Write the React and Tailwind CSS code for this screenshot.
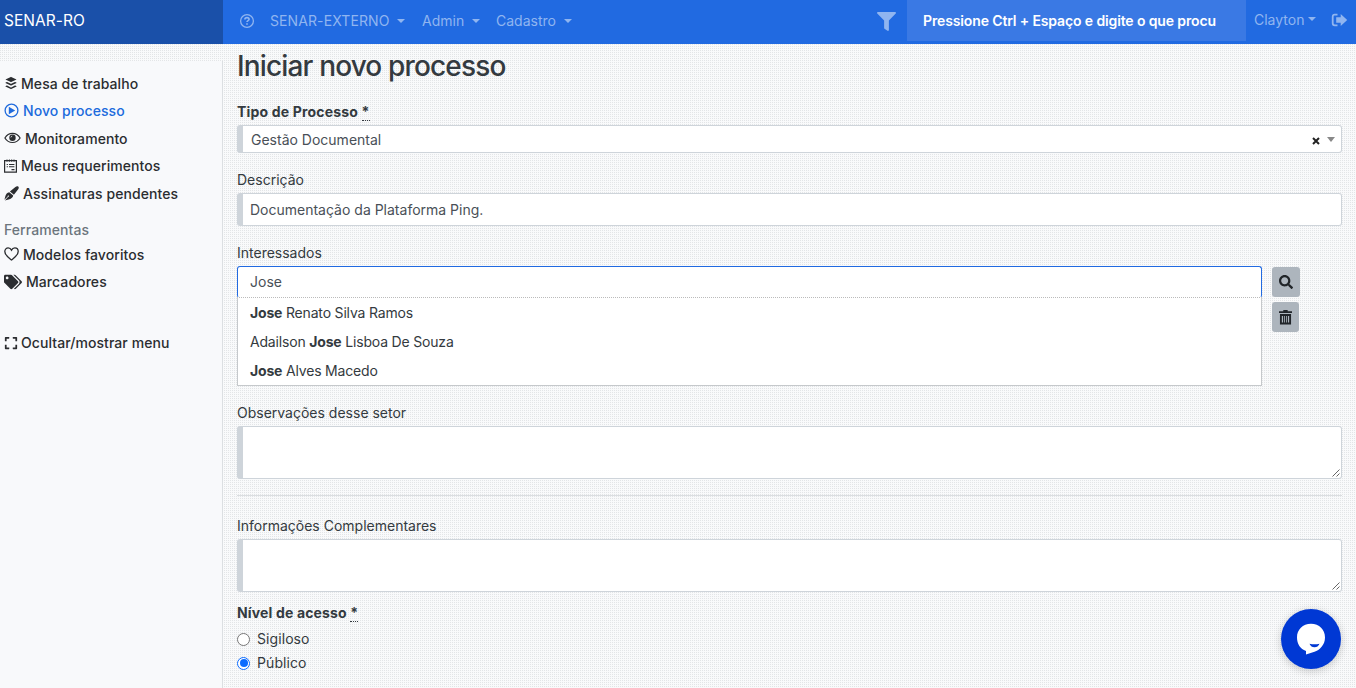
import React from "react";
import { FaBuffer, FaTags, FaSearch, FaExpand, FaFilter } from "react-icons/fa";

const label = "text-[14px] leading-[22px] text-[#343a40]";
const field =
  "w-full rounded-[3px] border border-l-[6px] border-[#ced4da] bg-white text-[14px] text-[#495057]";

function Caret({ className = "" }) {
  return (
    <span
      className={`inline-block h-0 w-0 border-x-4 border-t-4 border-x-transparent border-t-current ${className}`}
    />
  );
}

function HelpIcon() {
  return (
    <svg width="16" height="16" viewBox="0 0 16 16" fill="none" stroke="currentColor">
      <circle cx="8" cy="8" r="6.4" strokeWidth="1.3" />
      <path d="M5.9 6.5C5.9 5.2 6.8 4.6 8 4.6s2.1.7 2.1 1.7c0 1.4-2.1 1.3-2.1 2.7M8 10.3v1.5" strokeWidth="1.6" />
    </svg>
  );
}

function PlayIcon() {
  return (
    <svg width="15" height="15" viewBox="0 0 15 15">
      <circle cx="7.5" cy="7.5" r="6.4" fill="none" stroke="currentColor" strokeWidth="1.3" />
      <path d="M4.8 3.800v7.400l6.400-3.700z" fill="currentColor" />
    </svg>
  );
}

function EyeIcon() {
  return (
    <svg width="17" height="12" viewBox="0 0 17 12" fill="none" stroke="currentColor">
      <path d="M.9 6C4.5-.3 12.5-.3 16.100 6c-3.600 6-11.600 6-15.200 0z" strokeWidth="1.200" />
      <circle cx="8.500" cy="5.800" r="3.200" fill="currentColor" stroke="none" />
      <path d="M6.900 5.400q.2-1 1.300-1.300" stroke="white" strokeWidth=".8" />
    </svg>
  );
}

function FormIcon() {
  return (
    <svg width="13" height="14" viewBox="0 0 13 14" fill="none" stroke="currentColor">
      <path d="M.6 1.600h11.800v11.600H.6z" strokeWidth="1.200" />
      <path d="M3 .5v2.200M5.400.5v2.200M7.700.5v2.200M10 .5v2.200" strokeWidth="1" />
      <path d="M2.700 5.500h1.200M5 5.500h5.400M2.700 7.800h1.200M5 7.800h5.400M7.500 10.600h3" strokeWidth="1.100" />
    </svg>
  );
}

function PenIcon() {
  return (
    <svg width="15" height="15" viewBox="0 0 15 15" fill="currentColor">
      <path d="M14.200.5c.9.7.6 1.800 0 2.700L9.900 8.800 5.900 5.500 11.400.9c.9-.7 2-1 2.800-.4zM5.200 6.200l4 3.300c-.2 2.300-2.300 3.400-4.600 3.900L.9 14.400l3.300-3.700c.9.200 1.300-.8.500-1.200-.7-.2-1.200.2-1 .9L.4 13.700 1.400 10c.6-2 1.700-3.600 3.800-3.800z" />
    </svg>
  );
}

function HeartIcon() {
  return (
    <svg width="15" height="14" viewBox="0 0 15 14" fill="none" stroke="currentColor" strokeWidth="1.300">
      <path d="M7.500 13C5.200 11.100.8 8.200.8 4.500.8 2.300 2.400.9 4.200.9c1.400 0 2.600.8 3.300 2.200C8.200 1.700 9.400.9 10.800.9c1.800 0 3.400 1.400 3.400 3.600 0 3.700-4.400 6.600-6.700 8.500z" />
    </svg>
  );
}

function LogoutIcon() {
  return (
    <svg width="17" height="14" viewBox="0 0 17 14">
      <path d="M6.500 1.700H3.700q-2 0-2 2v6.600q0 2 2 2h2.800" fill="none" stroke="currentColor" strokeWidth="1.800" />
      <path d="M9.700 1v3.300H5.200v5.400h4.500V13L16.200 7z" fill="currentColor" />
    </svg>
  );
}

function TrashIcon() {
  return (
    <svg width="13" height="15" viewBox="0 0 13 15" fill="none" stroke="currentColor">
      <path d="M0 2.200h13M4.300 1h4.400" strokeWidth="1.800" />
      <path d="M1.900 5h9.200v8.500H1.900z" strokeWidth="1.900" />
      <path d="M4.600 5v8M6.500 5v8M8.400 5v8" strokeWidth="1.100" />
    </svg>
  );
}

function Grip() {
  return (
    <svg className="absolute right-px bottom-px" width="8" height="8" viewBox="0 0 8 8" stroke="#555" strokeWidth=".9">
      <path d="M.5 7.500l7-7M4.500 7.500l3-3" />
    </svg>
  );
}

function Item({ icon, text, gap = "gap-[4px]", active }) {
  return (
    <a className={`flex h-[27.400px] items-center ${gap} ${active ? "text-[#206bdd]" : "text-[#2b2d30]"}`}>
      {icon}
      <span>{text}</span>
    </a>
  );
}

function NavItem({ text, className }) {
  return (
    <span className={`flex items-center gap-[8px] ${className}`}>
      {text}
      <Caret />
    </span>
  );
}

function Required() {
  return <abbr className="border-b border-dotted border-[#343a40] leading-none no-underline">*</abbr>;
}

function Area() {
  return (
    <div className={`${field} relative h-[53px]`}>
      <Grip />
    </div>
  );
}

export default function App() {
  return (
    <div className="flex h-[688px] w-[1356px] flex-col overflow-hidden bg-[#f9fafb] bg-[conic-gradient(at_1px_1px,transparent_75%,#e3e5e7_0)] bg-[length:2px_2px] font-['Inter',sans-serif] text-[14px]">
      <header className="flex h-[44px] shrink-0 bg-[#216ae1] text-[#90b5f0]">
        <div className="flex w-[223px] items-center bg-[#1a50a9] pb-[2px] pl-[4px] text-[15.500px] tracking-[0.050px] text-white">
          SENAR-RO
        </div>
        <div className="flex flex-1 items-center pb-[3px] pl-[16px]">
          <HelpIcon />
          <NavItem text="SENAR-EXTERNO" className="ml-[15px] w-[152px] tracking-[0.100px]" />
          <NavItem text="Admin" className="w-[74px]" />
          <NavItem text="Cadastro" />
        </div>
        <div className="flex w-[30px] items-center pb-[2px]">
          <FaFilter size={19} />
        </div>
        <div className="flex h-[41px] w-[339px] items-center bg-[#3a79e4] pl-[16px] font-semibold tracking-[-0.130px] whitespace-nowrap text-white">
          Pressione Ctrl + Espaço e digite o que procu
        </div>
        <div className="flex w-[110px] items-center pb-[6px] pl-[8px]">
          <span>Clayton</span>
          <Caret className="ml-[4px]" />
          <span className="mt-[2px] ml-[15px]">
            <LogoutIcon />
          </span>
        </div>
      </header>

      <div className="flex flex-1">
        <aside className="mt-[17px] w-[223px] shrink-0 border-r border-[#dcdfe2] bg-[#f8f9fb] pt-[8.800px] pl-[4px] font-medium tracking-[0.070px]">
          <Item icon={<FaBuffer size={14} />} text="Mesa de trabalho" gap="gap-[3px]" />
          <Item icon={<PlayIcon />} text="Novo processo" active />
          <Item icon={<EyeIcon />} text="Monitoramento" />
          <Item icon={<FormIcon />} text="Meus requerimentos" />
          <Item icon={<PenIcon />} text="Assinaturas pendentes" />
          <div className="mt-[12.600px] h-[21.300px] leading-[22px] text-[#6c757d]">Ferramentas</div>
          <Item icon={<HeartIcon />} text="Modelos favoritos" />
          <Item icon={<FaTags size={18} />} text="Marcadores" />
          <div className="h-[33.700px]" />
          <Item icon={<FaExpand size={14} />} text="Ocultar/mostrar menu" gap="gap-[3px]" />
        </aside>

        <main className="w-[1133px] pr-[14px] pl-[14px]">
          <h1 className="mt-[4px] h-[37px] text-[28px] leading-[36px] font-medium tracking-[-0.850px] text-[#343a40]">
            Iniciar novo processo
          </h1>
          <div className={`${label} mt-[16px] h-[24px] font-bold tracking-[0.180px]`}>
            Tipo de Processo <Required />
          </div>
          <div className={`${field} flex h-[28px] items-center pr-[6px] pl-[8px] text-[#444]`}>
            <span className="mt-px flex-1">Gestão Documental</span>
            <svg width="8" height="8" viewBox="0 0 8 8" stroke="#222" strokeWidth="2" className="mt-[3px]">
              <path d="M1 1l6 6M7 1L1 7" />
            </svg>
            <span className="ml-[7px] h-0 w-0 border-x-4 border-t-5 border-x-transparent border-t-[#888]" />
          </div>

          <div className={`${label} mt-[16px] h-[24px]`}>Descrição</div>
          <div className={`${field} flex h-[33px] items-center pl-[7px]`}>Documentação da Plataforma Ping.</div>

          <div className={`${label} mt-[16px] h-[24px]`}>Interessados</div>
          <div className="flex h-[120px] gap-[10px]">
            <div className="w-[1025px]">
              <div className="flex h-[32px] items-center rounded-[3px] border border-b-0 border-[#216ae1] bg-white pb-[2px] pl-[12px] text-[#495057]">
                Jose
              </div>
              <div className="-mt-px h-[89px] border border-t border-[#c5c8cb] border-t-[#bbb] bg-white pl-[12px] leading-[29px] tracking-[-0.180px] text-[#343a40] [border-top-style:dotted]">
                <div><b>Jose</b> Renato Silva Ramos</div>
                <div>Adailson <b>Jose</b> Lisboa De Souza</div>
                <div><b>Jose</b> Alves Macedo</div>
              </div>
            </div>
            <div className="flex flex-col gap-[5px] pt-px text-[#212529]">
              <button className="flex h-[30px] w-[28px] items-center justify-center rounded-[3px] bg-[#adb5bd]">
                <FaSearch size={14} />
              </button>
              <button className="flex h-[30px] w-[27px] items-center justify-center rounded-[3px] bg-[#adb5bd]">
                <TrashIcon />
              </button>
            </div>
          </div>

          <div className={`${label} mt-[16px] h-[24px]`}>Observações desse setor</div>
          <Area />
          <div className="mt-[16px] h-px bg-[#dbdee1]" />
          <div className={`${label} mt-[19px] h-[24px]`}>Informações Complementares</div>
          <Area />
          <div className={`${label} mt-[10px] h-[25px] font-bold tracking-[0.150px]`}>
            Nível de acesso <Required />
          </div>
          <label className={`${label} flex h-[24px] items-center gap-[7px] tracking-[0.080px]`}>
            <span className="h-[13px] w-[13px] rounded-full border border-[#767676] bg-white" />
            Sigiloso
          </label>
          <label className={`${label} flex h-[24px] items-center gap-[7px] tracking-[0.080px]`}>
            <span className="flex h-[13px] w-[13px] items-center justify-center rounded-full border border-[#0b6bff] bg-white">
              <span className="h-[8px] w-[8px] rounded-full bg-[#0b6bff]" />
            </span>
            Público
          </label>
        </main>
      </div>

      <button className="fixed top-[609px] left-[1281px] flex h-[60px] w-[60px] items-center justify-center rounded-full bg-[#0038d4] shadow-[0_2px_9px_rgba(0,0,0,0.2)]">
        <svg width="30" height="32" viewBox="0 0 30 32">
          <path d="M15 .8c8.300 0 14 5.900 14 13.700 0 7.500-5.400 12.600-10.500 14.300L10 31.500v-3.600C4.300 26 1 20.900 1 14.500 1 6.700 6.700.8 15 .8z" fill="white" />
          <path d="M13.500 20.700q5 1 10 0-1.500 3.500-5 3.500t-5-3.500z" fill="#0038d4" />
        </svg>
      </button>
    </div>
  );
}
